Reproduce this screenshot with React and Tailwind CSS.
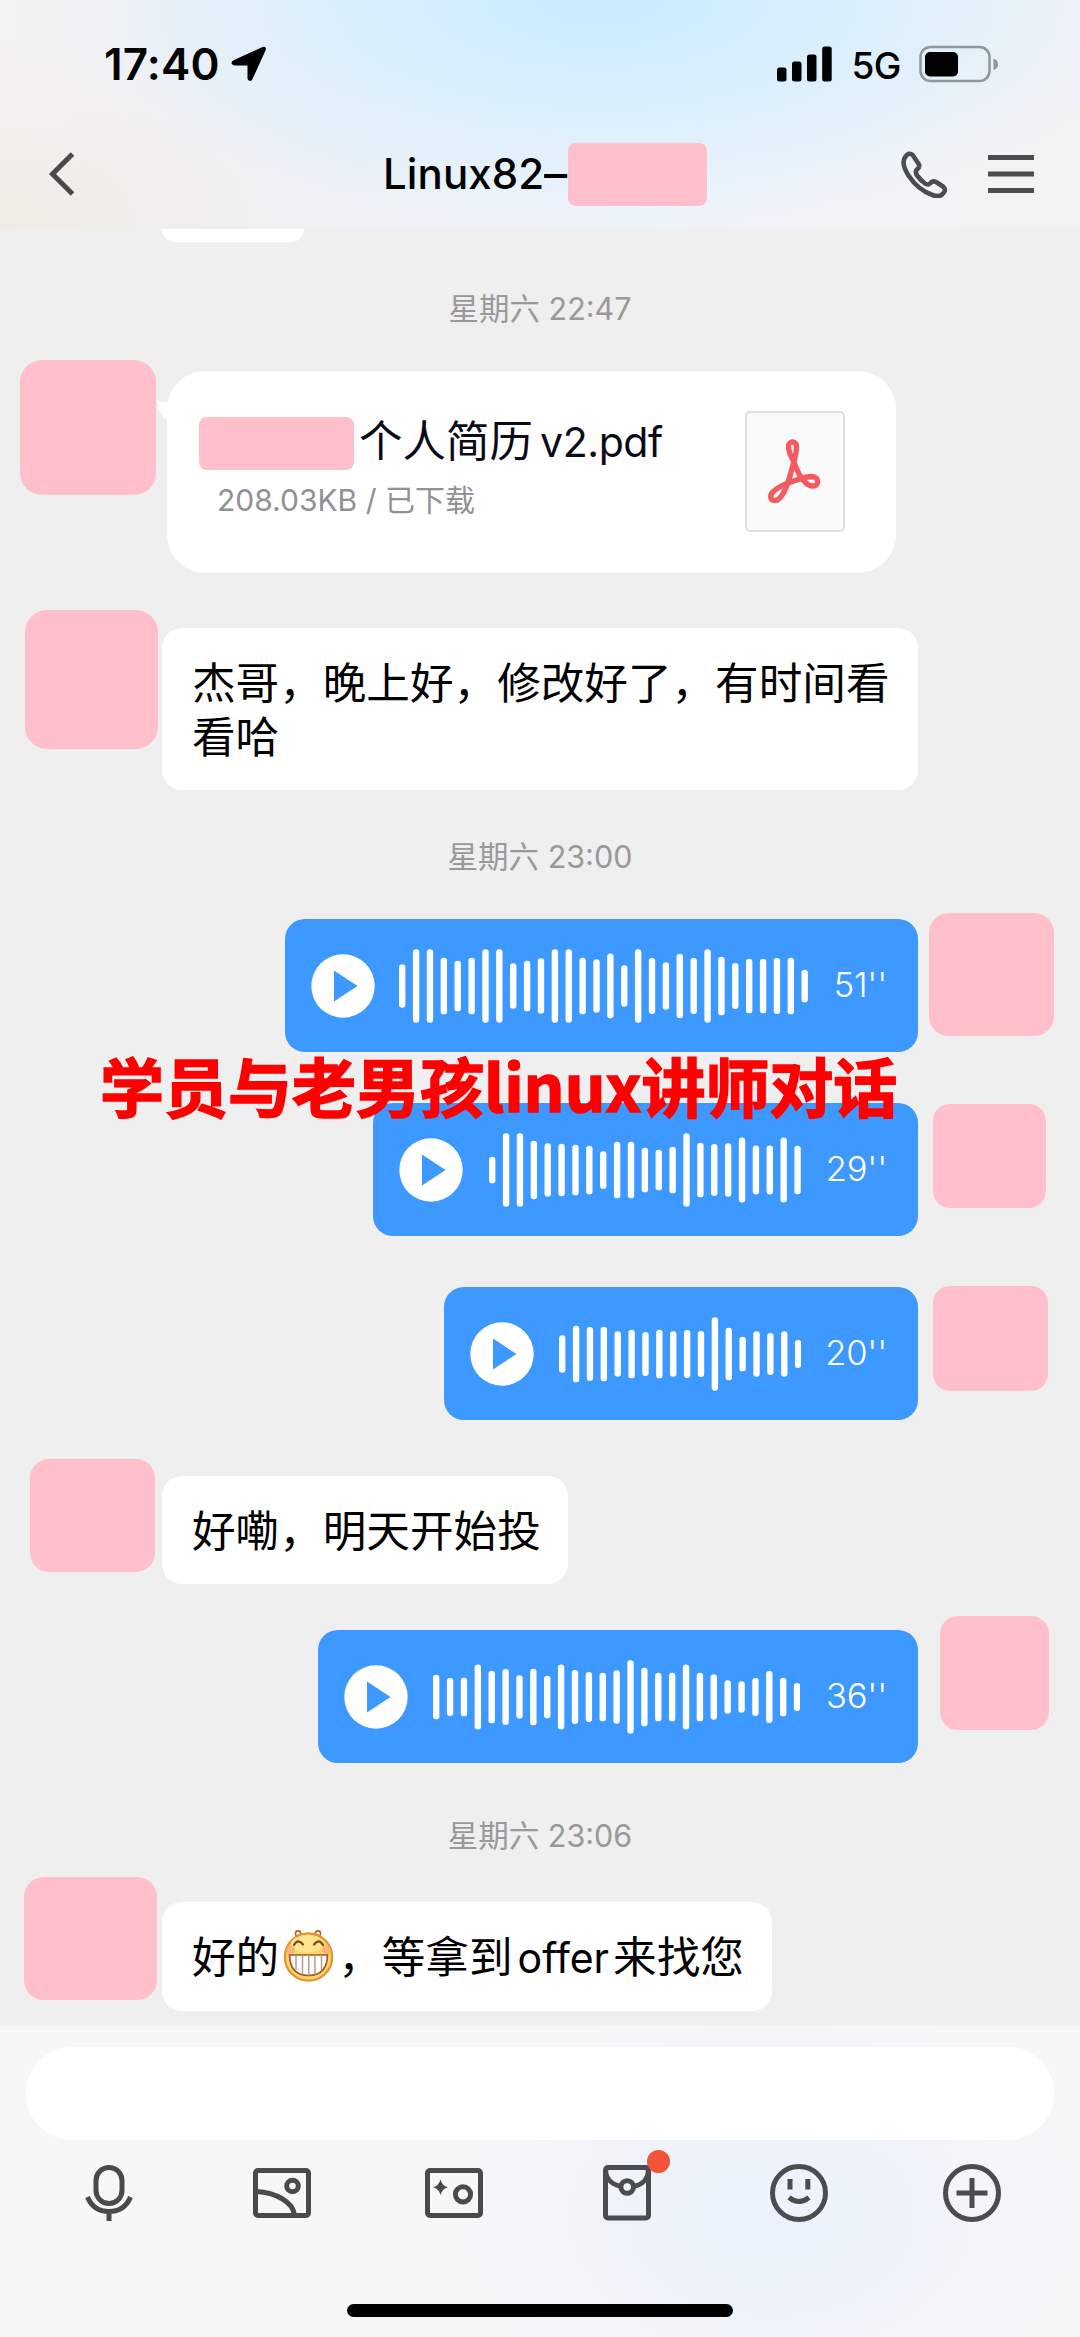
const CJK = "font-['Inter','Noto_Sans_CJK_SC',sans-serif]";

const WAVES = {
  a: [130, 220, 220, 170, 152, 170, 220, 220, 136, 152, 166, 220, 220, 170, 160, 195, 124, 220, 168, 142, 194, 168, 220, 176, 138, 164, 164, 168, 170, 98],
  b: [80, 220, 220, 175, 160, 157, 152, 146, 113, 170, 170, 134, 122, 140, 220, 164, 156, 160, 195, 147, 147, 195, 145],
  c: [112, 170, 162, 164, 136, 146, 132, 146, 136, 144, 138, 220, 158, 104, 136, 126, 136, 84],
  d: [134, 114, 116, 195, 158, 168, 130, 170, 128, 195, 162, 150, 146, 160, 220, 176, 146, 146, 195, 146, 136, 100, 94, 114, 156, 116, 84],
};

function Waveform({ bars, className }) {
  const pitch = 13.88;
  const width = pitch * (bars.length - 1) + 6.4;
  return (
    <svg className={`shrink-0 ${className}`} width={width} height="74" viewBox={`0 0 ${width} 74`} fill="#fff">
      {bars.map((b, i) => (
        <rect key={i} x={i * pitch} y={37 - b / 6} width="6.4" height={b / 3} rx="3.2" />
      ))}
    </svg>
  );
}

function VoiceRow({ row, bubble, avatar, bars, wave, time }) {
  return (
    <div className={`flex items-start justify-end ${row}`}>
      <div className={`flex h-[133px] shrink-0 items-center rounded-[20px] bg-[#3d98ff] pl-[26px] pr-[31px] ${bubble}`}>
        <svg className="shrink-0" width="64" height="64" viewBox="0 0 64 64">
          <circle cx="32" cy="32" r="31.7" fill="#fff" />
          <path d="M23 16.500 L46.500 32 L23 47.500 Z" fill="#3d98ff" />
        </svg>
        <Waveform bars={bars} className={wave} />
        <span className="ml-auto font-['Inter',sans-serif] text-[34.5px] font-light leading-none tracking-[-0.2px] text-white">{time}</span>
      </div>
      <div className={`shrink-0 bg-[#ffc0cb] ${avatar}`} />
    </div>
  );
}

function TimeLabel({ children, className }) {
  return (
    <div className={`h-10 text-center text-[30.5px] leading-10 text-[#999] ${CJK} ${className}`}>{children}</div>
  );
}

function Header() {
  return (
    <header className="h-[229px] bg-[radial-gradient(ellipse_560px_230px_at_600px_0px,#c9ecff_0%,#d5eeffdd_42%,#e4f0fc00_100%),radial-gradient(ellipse_320px_190px_at_0px_229px,#f1ebe4_0%,#f1ebe400_100%),linear-gradient(90deg,#f4f3f3_0%,#eff1f5_30%,#eff4fb_60%,#f3f3f4_90%)]">
      <div className="flex h-[128px] items-center pl-[104px] pr-[81px]">
        <span className="font-['Inter',sans-serif] text-[44px] font-semibold leading-none tracking-[0.2px] text-black">17:40</span>
        <svg className="ml-[11px]" width="36" height="36" viewBox="0 0 36 36" fill="#000">
          <path d="M31.500 1 Q36 -0.500 34.500 4.500 L21.500 33 Q20 35.800 17.800 34.500 Q16.500 33.500 16.500 32 V19.500 H3.500 Q0.500 19 0.500 16.800 Q0.500 15 3 14 Z" />
        </svg>
        <svg className="ml-auto" width="56" height="36" viewBox="0 0 56 36" fill="#000">
          <rect x="0" y="21.500" width="9.500" height="14" rx="2.500" />
          <rect x="15" y="15.500" width="9.500" height="20" rx="2.500" />
          <rect x="30" y="8.500" width="9.500" height="27" rx="2.500" />
          <rect x="45.200" y="0.500" width="9.500" height="35" rx="2.500" />
        </svg>
        <span className="ml-[18px] mt-[3px] font-['Inter',sans-serif] text-[37px] font-medium leading-none tracking-[-0.5px] text-black">5G</span>
        <svg className="ml-[18px]" width="80" height="38" viewBox="0 0 80 38">
          <rect x="1.500" y="2" width="69" height="34" rx="10" fill="none" stroke="#8f969c" strokeWidth="2.500" />
          <rect x="6" y="7" width="33" height="24.500" rx="5" fill="#000" />
          <path d="M74.500 13.500 Q79 15 79 19.200 Q79 23.500 74.500 25 Z" fill="#8f969c" />
        </svg>
      </div>
      <div className="flex h-[92px] items-center pl-[47px] pr-[46px]">
        <svg className="shrink-0" width="30" height="46" viewBox="0 0 30 46" fill="none" stroke="#4a4a4a" strokeWidth="5">
          <path d="M25.500 3 L5.500 23 L25.500 43" />
        </svg>
        <span className="ml-[306px] w-[185px] shrink-0 whitespace-nowrap font-['Inter',sans-serif] text-[42px] font-medium leading-none tracking-[0.1px] text-black">Linux82<span className="inline-block origin-left scale-x-[1.1]">–</span></span>
        <div className="h-[63px] w-[139px] shrink-0 rounded-[8px] bg-[#ffc0cb]" />
        <svg className="ml-[193px] shrink-0" width="48" height="48" viewBox="0 0 48 48" fill="none" stroke="#4a4d50" strokeWidth="4.600" strokeLinejoin="round">
          <path d="M5.500 6.500 Q9 2 12.500 4.800 L19 14.500 Q20 17 17 19.500 Q14.500 22 17.500 26 Q21 30.500 25 33.500 Q28.500 36 31 32.500 Q33 30.500 36 32 L43 36.500 Q46.500 39.500 43.500 43 Q40 48 32.500 45 Q18 40 8.500 25.500 Q0.500 13 5.500 6.500 Z" />
        </svg>
        <svg className="ml-[40px] shrink-0" width="46" height="40" viewBox="0 0 46 40" stroke="#4a4d50" strokeWidth="5">
          <path d="M0 3.500 H46 M0 20 H46 M0 36.500 H46" />
        </svg>
      </div>
    </header>
  );
}

function GrinEmoji() {
  return (
    <svg className="ml-1 mr-[4px] shrink-0" width="51" height="52" viewBox="0 0 51 52" fill="none">
      <circle cx="15" cy="3.500" r="2.600" stroke="#a8692a" strokeWidth="1.600" />
      <circle cx="35" cy="3.500" r="2.600" stroke="#a8692a" strokeWidth="1.600" />
      <circle cx="25.500" cy="27" r="23.700" fill="#fcd667" stroke="#e09433" strokeWidth="2.200" />
      <ellipse cx="24" cy="14" rx="16" ry="9" fill="#fde58d" />
      <circle cx="7.500" cy="20" r="4.500" fill="#f9a77d" opacity="0.7" />
      <circle cx="43.500" cy="20" r="4.500" fill="#f9a77d" opacity="0.7" />
      <path d="M11 15 Q15 8 20 14.500 M31 14.500 Q36 8 40 15" stroke="#7a4a1e" strokeWidth="2.200" strokeLinecap="round" />
      <path d="M6.500 25 H44.500 Q44 45.500 25.500 45.500 Q7 45.500 6.500 25 Z" fill="#fff" stroke="#a3542a" strokeWidth="1.700" />
      <path d="M13 25 V40 M19.500 25 V44.500 M25.800 25 V45.500 M32 25 V44.500 M38.500 25 V40" stroke="#b99a92" strokeWidth="1.500" />
    </svg>
  );
}

function PdfTile() {
  return (
    <div className="mt-10 h-[121px] w-[100px] shrink-0 rounded-[5px] border-2 border-[#e0e0e0] bg-[#fafafa]">
      <svg width="96" height="117" viewBox="0 0 96 117" fill="none" stroke="#f35b60" strokeWidth="5.400" strokeLinejoin="round" strokeLinecap="round">
        <path d="M46.500 48 C42.500 41 41.500 37 41.500 33.500 C41.500 27.500 49.500 27.500 49.500 33.500 C49.500 38 48.500 43 46.500 50 C44.500 58 43 64 40 72 C37 80 33 87.500 28 87.500 C22.500 87.500 22.500 81.500 27 78 C31 74.500 36 72 41 70 C48 67.500 56 64 64 63.500 C72.500 63.500 72.500 72.500 66.500 73 C61 73.500 55 67 52 61 C49.500 56 48 52 46.500 48 Z" />
      </svg>
    </div>
  );
}

function Footer() {
  return (
    <footer className="h-[311px] bg-[radial-gradient(ellipse_330px_230px_at_770px_190px,#ecf3fd_0%,#edf3fbcc_45%,#f7f7f700_100%)] bg-[#f7f7f7] pt-[21px]">
      <div className="mx-[26px] h-[93px] rounded-[46px] bg-white" />
      <div className="mt-[10px] flex justify-between pl-[79px] pr-[78px]">
        {/* Microphone */}
        <svg width="60" height="80" viewBox="0 0 60 80" fill="none" stroke="#4a4a4a" strokeWidth="5">
          <rect x="17" y="17.500" width="26" height="36" rx="13" />
          <path d="M8.500 47 Q14.500 61.500 30 61.500 Q45.500 61.500 51.500 47 M30 61 V71" />
        </svg>
        {/* Album */}
        <svg width="60" height="80" viewBox="0 0 60 80" fill="none" stroke="#4a4a4a" strokeWidth="5">
          <rect x="3.500" y="20.500" width="53" height="45" rx="2.500" />
          <path d="M4 41.500 C24 42.500 41 52 42.500 65" />
          <circle cx="40.500" cy="36" r="5.800" />
        </svg>
        {/* Camera */}
        <svg width="60" height="80" viewBox="0 0 60 80" fill="none" stroke="#4a4a4a" strokeWidth="5">
          <rect x="3.500" y="20.500" width="53" height="45" rx="2.500" />
          <circle cx="39" cy="44.300" r="7.600" />
          <path d="M16.500 29.500 Q18 35.800 24 37.300 Q18 38.800 16.500 45 Q15 38.800 9 37.300 Q15 35.800 16.500 29.500 Z" fill="#4a4a4a" stroke="none" />
        </svg>
        {/* Red packet */}
        <div className="relative">
          <svg width="60" height="80" viewBox="0 0 60 80" fill="none" stroke="#4a4d50" strokeWidth="5">
            <rect x="8.500" y="17.500" width="43" height="50.500" rx="2.500" />
            <path d="M9 20 Q8.500 33 24.500 36.500 M51 20 Q51.500 33 36.500 36.500" strokeWidth="4.500" />
            <circle cx="30.200" cy="37" r="6.300" />
          </svg>
          <div className="absolute left-[50px] top-0 h-[23px] w-[23px] rounded-full bg-[#f4533b]" />
        </div>
        {/* Smiley */}
        <svg width="60" height="80" viewBox="0 0 60 80" fill="none" stroke="#4a4d50" strokeWidth="5">
          <circle cx="30" cy="43" r="26.500" />
          <path d="M21 29 V39.500 M38.800 29 V39.500 M20 47.500 Q30 55.500 40 47.500" />
        </svg>
        {/* More */}
        <svg width="60" height="80" viewBox="0 0 60 80" fill="none" stroke="#4a4d50" strokeWidth="5">
          <circle cx="30" cy="43" r="26.500" />
          <path d="M14.500 43 H45.500 M30 28 V58" />
        </svg>
      </div>
      <div className="mx-auto mt-[74px] h-[13px] w-[386px] rounded-full bg-black" />
    </footer>
  );
}

export default function App() {
  return (
    <div className="relative flex h-[2337px] w-[1080px] flex-col overflow-hidden bg-[#efefef]">
      <Header />

      <main className="flex h-[1797px] flex-col">
        <div className="ml-[162px] h-[13px] w-[142px] shrink-0 rounded-b-[16px] bg-white" />

        <TimeLabel className="mt-[47px]">星期六 22:47</TimeLabel>

        <div className="mt-[31px] flex h-[213px] items-start pl-5">
          <div className="h-[135px] w-[136px] rounded-[22px] bg-[#ffc0cb]" />
          <svg className="mt-[38px]" width="11" height="26" viewBox="0 0 11 26" fill="#fff">
            <path d="M0 2 Q5 5 11 4 V22 Q4 18 0 2 Z" />
          </svg>
          <div className="mt-[11px] flex h-[202px] w-[729px] items-start rounded-[38px] bg-white pl-8 pr-[51px]">
            <div className="flex flex-col">
              <div className="mt-[46px] flex h-[53px] items-center">
                <div className="h-[53px] w-[155px] rounded-[8px] bg-[#ffc0cb]" />
                <span className={`mb-[5px] ml-[5px] whitespace-nowrap text-[#0b0b18] ${CJK}`}>
                  <span className="text-[43.5px] leading-[50px]">个人简历</span>
                  <span className="ml-[7px] text-[41px] leading-[50px] tracking-[-0.400px]">v2.pdf</span>
                </span>
              </div>
              <div className={`ml-[18px] mt-[10px] whitespace-nowrap text-[30px] leading-10 text-[#909095] ${CJK}`}>208.03KB / 已下载</div>
            </div>
            <div className="ml-auto">
              <PdfTile />
            </div>
          </div>
        </div>

        <div className="mt-[37px] flex h-[180px] items-start pl-[25px]">
          <div className="h-[139px] w-[133px] rounded-[22px] bg-[#ffc0cb]" />
          <div className={`ml-1 mt-[18px] h-[162px] w-[756px] rounded-[20px] bg-white pl-[30px] pt-[29px] text-[43.6px] leading-[54px] text-black ${CJK}`}>
            <p className="whitespace-nowrap">杰哥，晚上好，修改好了，有时间看</p>
            <p>看哈</p>
          </div>
        </div>

        <TimeLabel className="mt-[47px]">星期六 23:00</TimeLabel>

        <VoiceRow row="mt-[36px] h-[139px] pr-[26px]" bubble="mt-[6px] w-[633px]" avatar="ml-[11px] h-[123px] w-[125px] rounded-[20px]" bars={WAVES.a} wave="ml-[24px]" time="51''" />
        <VoiceRow row="mt-[51px] h-[133px] pr-[34px]" bubble="w-[545px]" avatar="ml-[15px] mt-px h-[104px] w-[113px] rounded-[17px]" bars={WAVES.b} wave="ml-[26px]" time="29''" />
        <VoiceRow row="mt-[50px] h-[134px] pr-8" bubble="mt-px w-[474px]" avatar="ml-[15px] h-[105px] w-[115px] rounded-[17px]" bars={WAVES.c} wave="ml-[25px]" time="20''" />

        <div className="mt-[39px] flex h-[125px] items-start pl-[30px]">
          <div className="h-[113px] w-[125px] rounded-[19px] bg-[#ffc0cb]" />
          <div className={`ml-[7px] mt-[17px] h-[108px] w-[406px] whitespace-nowrap rounded-[20px] bg-white pl-[30px] pt-[29px] text-[43.6px] leading-[54px] text-black ${CJK}`}>
            好嘞，明天开始投
          </div>
        </div>

        <VoiceRow row="mt-[32px] h-[147px] pr-[31px]" bubble="mt-[14px] w-[600px]" avatar="ml-[22px] h-[114px] w-[109px] rounded-[18px]" bars={WAVES.d} wave="ml-[25px]" time="36''" />

        <TimeLabel className="mt-[53px]">星期六 23:06</TimeLabel>

        <div className="mt-[21px] flex h-[134px] items-start pl-6">
          <div className="h-[123px] w-[133px] rounded-[20px] bg-[#ffc0cb]" />
          <div className={`ml-[5px] mt-[25px] flex h-[109px] w-[610px] items-center whitespace-nowrap rounded-[20px] bg-white pl-[30px] pt-[2px] text-[43.6px] leading-[54px] text-black ${CJK}`}>
            <span>好的</span>
            <span className="-mt-1"><GrinEmoji /></span>
            <span>，等拿到</span>
            <span className="ml-[5px] mr-[4px] text-[41px] tracking-[0px]">offer</span>
            <span>来找您</span>
          </div>
        </div>
      </main>

      <Footer />

      <div className="absolute left-[100px] top-[1051px] whitespace-nowrap font-['Noto_Sans_CJK_SC',sans-serif] text-[64px] font-bold leading-[66px] text-[#ff0000] [-webkit-text-stroke:1.6px_#ff0000]">
        学员与老男孩linux讲师对话
      </div>
    </div>
  );
}
